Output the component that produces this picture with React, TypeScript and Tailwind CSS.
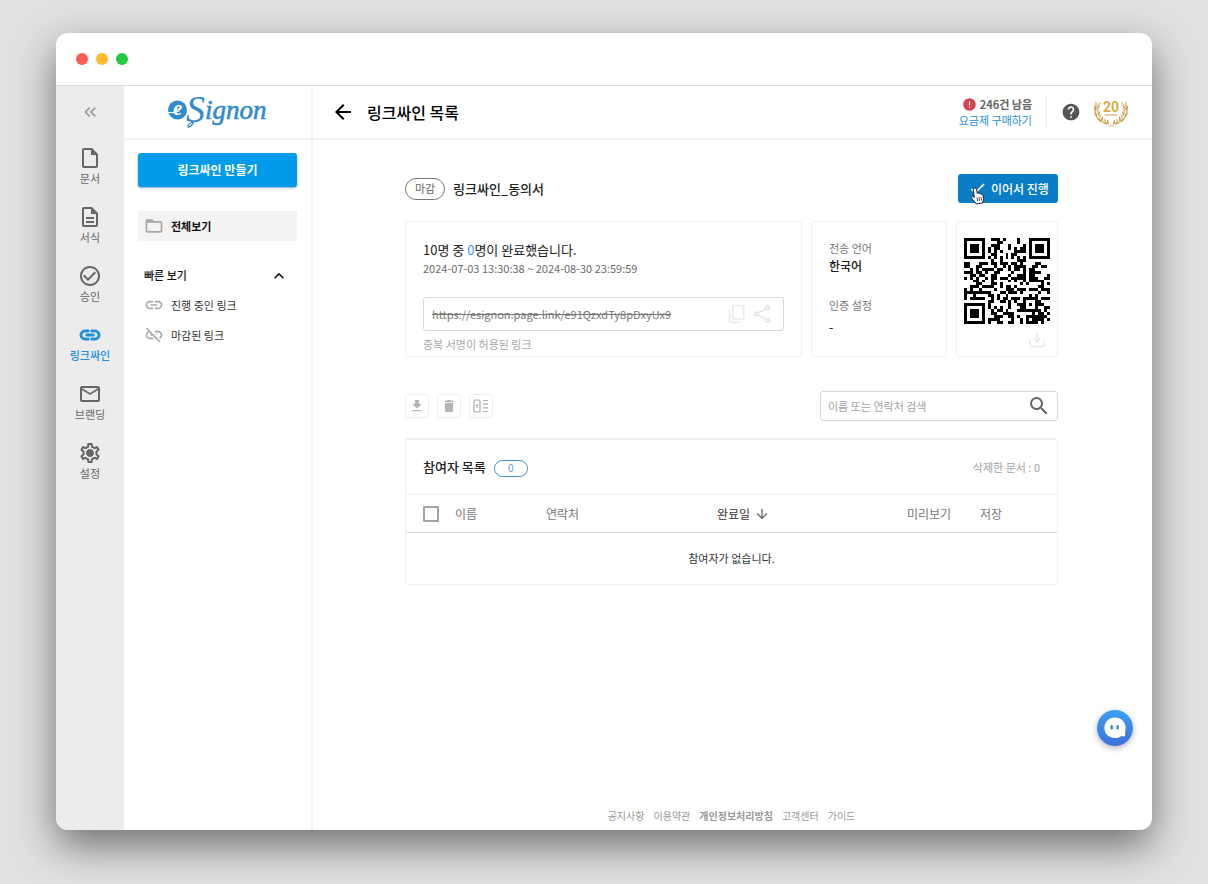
import React, { useState } from 'react';
import type { IconType } from 'react-icons';
import {
  MdArrowBack,
  MdArrowDownward,
  MdCheck,
  MdCheckCircleOutline,
  MdContentCopy,
  MdDelete,
  MdError,
  MdFileDownload,
  MdFolderOpen,
  MdHelp,
  MdKeyboardArrowUp,
  MdKeyboardDoubleArrowLeft,
  MdLink,
  MdLinkOff,
  MdMailOutline,
  MdOutlineDescription,
  MdOutlineInsertDriveFile,
  MdOutlineSettings,
  MdOutlineShare,
  MdSearch
} from 'react-icons/md';

const LINK_URL = 'https://esignon.page.link/e91QzxdTy8pDxyUx9';

/* ---------- QR code (version 3, level L, byte mode) ---------- */

const QR_SIZE = 29;
const QR_DATA = 55;
const QR_ECC = 15;
const QR_FORMAT = '110001100011000'; // level L, mask 5

const gfMul = (a: number, b: number) => {
  let r = 0;
  for (let i = 7; i >= 0; i--) {
    r = (r << 1) ^ ((r >>> 7) * 0x11d);
    r ^= ((b >>> i) & 1) * a;
  }
  return r;
};

const eccBytes = (data: number[]) => {
  const gen = new Array(QR_ECC).fill(0);
  gen[QR_ECC - 1] = 1;
  let root = 1;
  for (let i = 0; i < QR_ECC; i++) {
    for (let j = 0; j < QR_ECC; j++) {
      gen[j] = gfMul(gen[j], root) ^ (gen[j + 1] || 0);
    }
    root = gfMul(root, 2);
  }
  const rem = new Array(QR_ECC).fill(0);
  data.forEach((b) => {
    const factor = b ^ rem.shift();
    rem.push(0);
    gen.forEach((g, i) => {
      rem[i] ^= gfMul(g, factor);
    });
  });
  return rem;
};

function buildQr(text: string): boolean[][] {
  let bits = '0100' + text.length.toString(2).padStart(8, '0');
  for (const ch of text) bits += ch.charCodeAt(0).toString(2).padStart(8, '0');
  bits += '0000';
  const data: number[] = [];
  for (let i = 0; i < bits.length; i += 8) data.push(parseInt(bits.slice(i, i + 8), 2));
  for (let pad = 0xec; data.length < QR_DATA; pad ^= 0xec ^ 0x11) data.push(pad);
  const stream = [...data, ...eccBytes(data)].map((b) => b.toString(2).padStart(8, '0')).join('');

  const grid: (boolean | null)[][] = Array.from({ length: QR_SIZE }, () => new Array(QR_SIZE).fill(null));
  const square = (cy: number, cx: number, radius: number, light: number[]) => {
    for (let y = -radius; y <= radius; y++) {
      for (let x = -radius; x <= radius; x++) {
        const row = grid[cy + y];
        if (row && cx + x >= 0 && cx + x < QR_SIZE) {
          row[cx + x] = !light.includes(Math.max(Math.abs(x), Math.abs(y)));
        }
      }
    }
  };
  for (let i = 0; i < QR_SIZE; i++) {
    grid[6][i] = i % 2 === 0;
    grid[i][6] = i % 2 === 0;
  }
  square(3, 3, 4, [2, 4]);
  square(3, QR_SIZE - 4, 4, [2, 4]);
  square(QR_SIZE - 4, 3, 4, [2, 4]);
  square(22, 22, 2, [1]);

  const format = QR_FORMAT.split('').map((b) => b === '1');
  const near = [0, 1, 2, 3, 4, 5, 7, 8];
  near.forEach((p, i) => {
    grid[8][p] = format[i];
    grid[p][8] = format[14 - i];
  });
  for (let i = 0; i < 7; i++) grid[QR_SIZE - 1 - i][8] = format[i];
  for (let i = 0; i < 8; i++) grid[8][QR_SIZE - 8 + i] = format[7 + i];
  grid[QR_SIZE - 8][8] = true;

  let n = 0;
  for (let right = QR_SIZE - 1; right >= 1; right -= 2) {
    if (right === 6) right = 5;
    const up = ((right + 1) & 2) === 0;
    for (let v = 0; v < QR_SIZE; v++) {
      const y = up ? QR_SIZE - 1 - v : v;
      for (const x of [right, right - 1]) {
        if (grid[y][x] !== null) continue;
        const mask = ((x * y) % 2) + ((x * y) % 3) === 0;
        grid[y][x] = (stream[n++] === '1') !== mask;
      }
    }
  }
  return grid as boolean[][];
}

const QrCode = ({ value }: { value: string }) => (
  <svg viewBox={`0 0 ${QR_SIZE} ${QR_SIZE}`} className="size-[86px]" shapeRendering="crispEdges" role="img" aria-label="QR">
    {buildQr(value).map((row, y) =>
      row.map((on, x) => on && <rect key={`${x}-${y}`} x={x} y={y} width="1" height="1" fill="#000" />)
    )}
  </svg>
);

/* ---------- Drawings ---------- */

const Logo = () => (
  <svg viewBox="0 0 100 48" className="h-12 w-[100px]" role="img" aria-label="eSignon" fill="#2f8cc9">
    <circle cx="9.500" cy="22" r="9.500" />
    <text x="5" y="27" fontSize="21" fontWeight="700" fontStyle="italic" fontFamily="Liberation Serif, serif" fill="#fff">e</text>
    <path d="M0 24.500c4 .5 8 0 12-2" stroke="#fff" strokeWidth="1" fill="none" />
    <text x="18" y="34" fontSize="38" fontStyle="italic" fontFamily="Liberation Serif, serif">S</text>
    <text
      x="37"
      y="31"
      fontSize="27"
      fontStyle="italic"
      fontFamily="Liberation Serif, serif"
      stroke="#2f8cc9"
      strokeWidth="0.600"
    >
      ignon
    </text>
    <path d="M25 34c-3 1-5 3-5 5 2 0 5-2 6-6" stroke="#2f8cc9" strokeWidth="1.300" fill="none" />
  </svg>
);

const Laurel = () => {
  const leaves = [0, 1, 2, 3, 4, 5, 6, 7];
  return (
    <svg viewBox="0 0 36 32" className="h-8 w-9" aria-hidden="true">
      {[1, -1].map((side) => (
        <g key={side} transform={side === 1 ? undefined : 'translate(36 0) scale(-1 1)'}>
          <path d="M21 31C10 27 2 19 3 5" stroke="#d9bd85" strokeWidth="0.700" fill="none" />
          {leaves.map((i) => {
            const a = ((110 + i * 13) * Math.PI) / 180;
            const x = 18 + 15 * Math.cos(a);
            const y = 14 + 14 * Math.sin(a);
            return (
              <g key={i} fill={i % 2 ? '#dfc07c' : '#c09a50'}>
                <ellipse cx={x - 1} cy={y} rx="2.400" ry="0.900" transform={`rotate(${20 + i * 9} ${x - 1} ${y})`} />
                <ellipse cx={x + 2} cy={y - 1} rx="2.200" ry="0.800" transform={`rotate(${80 + i * 8} ${x + 2} ${y - 1})`} />
              </g>
            );
          })}
        </g>
      ))}
      <text x="18" y="16" textAnchor="middle" fontSize="14" fontWeight="700" fontFamily="Roboto, sans-serif" fill="#dcab45">20</text>
      <path d="M12 19h12" stroke="#dfc07c" strokeWidth="1.500" />
    </svg>
  );
};

const SettingsIcon = ({ className }: { className?: string }) => (
  <svg viewBox="0 0 24 24" className={className} fill="currentColor">
    <MdOutlineSettings size={24} />
    <circle cx="12" cy="12" r="3" />
  </svg>
);

const ColumnsIcon = () => (
  <svg viewBox="0 0 16 16" className="size-4" fill="none" stroke="#a9adad" strokeWidth="1.200">
    <rect x="1" y="2" width="6" height="12" rx="1.500" />
    <path d="M3 6.500l2 3M5 6.500l-2 3M10 2.500h5M10 6.200h5M10 9.800h5M10 13.500h5" />
  </svg>
);

const TrayIcon = () => (
  <svg viewBox="0 0 16 16" className="size-4" fill="none" stroke="#e8e8e8" strokeWidth="1.400">
    <path d="M8 1v8.500M4.500 6.500L8 10l3.500-3.500M1 8.500v4.500q0 1.500 1.500 1.500h11q1.500 0 1.500-1.500V8.500" />
  </svg>
);

const HandCursor = () => (
  <svg viewBox="0 0 16 18" className="pointer-events-none absolute left-[12px] top-[13px] h-[18px] w-4" aria-hidden="true">
    <path
      d="M4.500 1.200c1-.4 1.900.2 2.100 1.200l.6 3.800c.8-.5 1.600-.3 2 .5.700-.5 1.600-.2 1.900.6.900-.3 1.700.2 1.900 1.100l.5 3.200c.2 1.500-.6 2.600-.9 4.400l-6.400 1c-.9-2-3-3.600-4.900-6.200-.9-1.300.5-2.200 1.500-1.400l1.500 1.200L3.400 3c-.2-.8.200-1.500 1.100-1.800z"
      fill="#fff"
      stroke="#222"
      strokeWidth="1"
    />
    <path d="M7 10.500l.6 3.500M9 10.300l.5 3.500M11 10l.5 3.500" stroke="#222" strokeWidth="0.800" />
  </svg>
);

const ChatIcon = () => (
  <svg viewBox="0 0 36 36" className="size-9" aria-hidden="true">
    <path d="M18 7.500c6.200 0 10.600 4.300 10.600 10.300 0 2.500-.7 4.400-.4 6.600.2 1.200-.2 2-1.300 2-1 0-1.800-.5-2.700-.2-1.900 1.300-3.900 1.900-6.200 1.900-6.200 0-10.600-4.300-10.600-10.300S11.800 7.500 18 7.500z" fill="#fff" />
    <rect x="13.500" y="15" width="2.400" height="4.500" rx="1.200" fill="#3f83dc" />
    <rect x="19.500" y="15" width="2.400" height="4.500" rx="1.200" fill="#3f83dc" />
  </svg>
);

/* ---------- Page sections ---------- */

interface RailItem {
  label: string;
  icon: IconType | typeof SettingsIcon;
  active?: boolean;
}

const RAIL_ITEMS: RailItem[] = [
  { label: '문서', icon: MdOutlineInsertDriveFile },
  { label: '서식', icon: MdOutlineDescription },
  { label: '승인', icon: MdCheckCircleOutline },
  { label: '링크싸인', icon: MdLink, active: true },
  { label: '브랜딩', icon: MdMailOutline },
  { label: '설정', icon: SettingsIcon }
];

const IconRail = () => (
  <nav className="flex w-[68px] shrink-0 flex-col items-center bg-[#ececec] pt-4">
    <button aria-label="메뉴 접기" className="text-[#9b9b9b]">
      <MdKeyboardDoubleArrowLeft className="size-5" />
    </button>
    <ul className="mt-6 flex flex-col">
      {RAIL_ITEMS.map(({ label, icon: Icon, active }) => (
        <li key={label} className="h-[59px]">
          <a
            href="#"
            className={`flex flex-col items-center text-[11px] leading-4 ${active ? 'font-medium text-[#1c8fe0]' : 'text-[#666]'}`}
          >
            <Icon className={active ? 'size-6 stroke-0 [&>path:last-child]:stroke-[#1c8fe0] [&>path:last-child]:stroke-1' : 'size-6'} />
            {label}
          </a>
        </li>
      ))}
    </ul>
  </nav>
);

const Sidebar = () => (
  <aside className="flex w-[189px] shrink-0 flex-col border-r-2 border-[#f3f3f3]">
    <div className="flex h-[54px] shrink-0 items-center justify-center border-b-2 border-[#f3f3f3]">
      <Logo />
    </div>
    <div className="px-[14px] pt-[13px]">
      <button className="h-[34px] w-full rounded-[3px] bg-[#009bea] text-xs font-bold text-white shadow-[0_1px_2px_rgba(0,90,140,0.5)]">
        링크싸인 만들기
      </button>
      <a href="#" className="mt-6 flex h-[30px] items-center bg-[#f3f3f3] pl-1.5 text-[11px] font-bold text-[#111]">
        <MdFolderOpen className="mr-[7px] size-5 text-[#a8a8a8]" />
        전체보기
      </a>
      <button className="mt-5 flex h-[29px] w-full items-center justify-between pl-1.5 pr-2 text-[11px] font-medium text-[#111]">
        빠른 보기
        <MdKeyboardArrowUp className="size-5" />
      </button>
      <a href="#" className="flex h-[30px] items-center pl-1.5 text-[11px] text-[#333]">
        <MdLink className="mr-[7px] size-5 text-[#a8a8a8]" />
        진행 중인 링크
      </a>
      <a href="#" className="flex h-[30px] items-center pl-1.5 text-[11px] text-[#333]">
        <MdLinkOff className="mr-[7px] size-5 text-[#a8a8a8]" />
        마감된 링크
      </a>
    </div>
  </aside>
);

const Header = () => (
  <header className="flex h-[54px] shrink-0 items-center border-b-2 border-[#f3f3f3] pl-[18px] pr-[23px]">
    <button aria-label="뒤로" className="text-black">
      <MdArrowBack className="size-6" />
    </button>
    <h1 className="ml-3 flex-1 text-base font-medium text-black">링크싸인 목록</h1>
    <div className="text-right text-[11px] leading-4">
      <p className="flex items-center justify-end gap-[3px] font-bold text-[#666]">
        <MdError className="size-[15px] text-[#d8434e]" />
        246건 남음
      </p>
      <a href="#" className="block text-[#1f8fd8]">요금제 구매하기</a>
    </div>
    <div className="ml-[14px] h-8 border-l border-[#eee]" />
    <button aria-label="도움말" className="ml-[14px] text-[#555]">
      <MdHelp className="size-5" />
    </button>
    <div className="ml-3">
      <Laurel />
    </div>
  </header>
);

const SummaryCards = () => (
  <section className="mt-[18px] flex gap-[9px]">
    <div className="h-[136px] flex-1 rounded-[3px] border border-[#f0f0f0] px-[17px] pt-[18px]">
      <p className="text-[13px] leading-5 text-[#222]">
        10명 중 <span className="text-[#3a97dc]">0</span>명이 완료했습니다.
      </p>
      <p className="text-[11px] leading-4 text-[#6b6b6b]">2024-07-03 13:30:38 ~ 2024-08-30 23:59:59</p>
      <div className="mt-[21px] flex h-[34px] items-center rounded-[3px] border border-[#d9d9d9] pl-2 pr-2.5">
        <a href="#" className="flex-1 text-[11px] text-[#777] line-through">{LINK_URL}</a>
        <button aria-label="복사" className="text-[#ebebeb]">
          <MdContentCopy className="size-5 -scale-y-100" />
        </button>
        <button aria-label="공유" className="ml-1 text-[#e6e6e6]">
          <MdOutlineShare className="size-[22px]" />
        </button>
      </div>
      <p className="mt-[5px] text-[11px] leading-4 text-[#a9a9a9]">중복 서명이 허용된 링크</p>
    </div>
    <dl className="h-[136px] w-[136px] rounded-[3px] border border-[#f0f0f0] px-[17px] pt-[17px] text-xs leading-[18px]">
      <dt className="text-[11px] text-[#777]">전송 언어</dt>
      <dd className="font-medium text-[#222]">한국어</dd>
      <dt className="mt-[21px] text-[11px] text-[#777]">인증 설정</dt>
      <dd className="mt-1 font-medium text-[#222]">-</dd>
    </dl>
    <div className="flex h-[136px] w-[102px] flex-col items-center rounded-[3px] border border-[#f0f0f0] pt-4">
      <QrCode value={LINK_URL} />
      <button aria-label="QR 다운로드" className="mr-3 mt-2 self-end">
        <TrayIcon />
      </button>
    </div>
  </section>
);

const toolButton = 'flex size-6 items-center justify-center rounded-[3px] border border-[#ededed] text-[#b3b6b6]';

const Toolbar = () => {
  const [query, setQuery] = useState('');
  return (
    <section className="mt-[34px] flex items-center gap-2">
      <button aria-label="다운로드" className={toolButton}>
        <MdFileDownload className="size-4" />
      </button>
      <button aria-label="삭제" className={toolButton}>
        <MdDelete className="size-4" />
      </button>
      <button aria-label="열 설정" className={toolButton}>
        <ColumnsIcon />
      </button>
      <div className="ml-auto flex h-[30px] w-[238px] items-center rounded-[3px] border border-[#d6d6d6] pl-[7px] pr-1.5">
        <input
          aria-label="검색"
          value={query}
          onChange={(e) => setQuery(e.target.value)}
          placeholder="이름 또는 연락처 검색"
          className="min-w-0 flex-1 text-[11px] text-[#333] outline-none placeholder:text-[#a3a3a3]"
        />
        <button aria-label="검색 실행" className="text-[#666]">
          <MdSearch className="size-6" />
        </button>
      </div>
    </section>
  );
};

const ParticipantTable = () => (
  <section className="mt-[17px] rounded-[3px] border border-t-2 border-[#f0f0f0]">
    <div className="flex h-[54px] items-center px-[17px]">
      <h2 className="text-[13px] font-medium text-[#222]">참여자 목록</h2>
      <span className="ml-2 mt-0.5 flex h-[17px] w-[34px] items-center justify-center rounded-full border border-[#3a8fd6] text-[10px] leading-none text-[#5a9fd8]">
        0
      </span>
      <span className="ml-auto text-[11px] text-[#a3a3a3]">삭제한 문서 : 0</span>
    </div>
    <table className="w-full table-fixed text-left text-xs text-[#777]">
      <colgroup>
        <col className="w-[49px]" />
        <col className="w-[91px]" />
        <col className="w-[171px]" />
        <col />
        <col className="w-[73px]" />
        <col className="w-[77px]" />
      </colgroup>
      <thead>
        <tr className="h-[38px] border-b border-t border-b-[#dcdcdc] border-t-[#f0f0f0]">
          <th className="pl-[17px] align-middle">
            <input
              type="checkbox"
              aria-label="전체 선택"
              className="block size-4 appearance-none rounded-[1px] border-2 border-[#a3a3a3] checked:bg-[#a3a3a3]"
            />
          </th>
          <th className="font-normal">이름</th>
          <th className="font-normal">연락처</th>
          <th className="font-normal text-[#333]">
            <button className="flex items-center gap-1">
              완료일
              <MdArrowDownward className="size-4 text-[#666]" />
            </button>
          </th>
          <th className="font-normal">미리보기</th>
          <th className="font-normal">저장</th>
        </tr>
      </thead>
      <tbody>
        <tr className="h-[51px]">
          <td colSpan={6} className="text-center text-[11px] text-[#333]">참여자가 없습니다.</td>
        </tr>
      </tbody>
    </table>
  </section>
);

const FOOTER_LINKS = ['공지사항', '이용약관', '개인정보처리방침', '고객센터', '가이드'];

export default function App() {
  return (
    <div className="flex min-h-screen flex-col bg-[#e1e1e1] px-14 pb-[54px] pt-[33px] font-['Noto_Sans_CJK_KR',sans-serif]">
      <div className="relative flex flex-1 flex-col overflow-hidden rounded-xl bg-white shadow-[0_16px_40px_rgba(0,0,0,0.5)]">
        <div className="flex h-[53px] shrink-0 items-center gap-2 border-b border-[#dcdcdc] pl-5">
          <span className="size-3 rounded-full bg-[#fc5b57]" />
          <span className="size-3 rounded-full bg-[#fdbb2e]" />
          <span className="size-3 rounded-full bg-[#28c840]" />
        </div>
        <div className="flex flex-1">
          <IconRail />
          <Sidebar />
          <div className="flex min-w-0 flex-1 flex-col">
            <Header />
            <div className="flex flex-1 flex-col pr-0.5">
              <main className="mx-auto w-full max-w-[653px] flex-1 pt-[34px]">
                <div className="flex items-center">
                  <span className="flex h-[22px] w-10 items-center justify-center rounded-full border border-[#777] text-[11px] text-[#666]">
                    마감
                  </span>
                  <h2 className="ml-2 text-[13px] font-medium text-[#222]">링크싸인_동의서</h2>
                  <button className="relative ml-auto flex h-[29px] w-[100px] items-center gap-1 rounded-[3px] bg-[#0b7dc6] pl-[10px] text-xs font-medium text-white">
                    <MdCheck className="size-[19px]" />
                    이어서 진행
                    <HandCursor />
                  </button>
                </div>
                <SummaryCards />
                <Toolbar />
                <ParticipantTable />
              </main>
              <footer className="flex justify-center gap-[9px] pb-[6px] text-[10px] leading-4 text-[#999]">
                {FOOTER_LINKS.map((label, i) => (
                  <a key={label} href="#" className={i === 2 ? 'font-bold' : ''}>
                    {label}
                  </a>
                ))}
              </footer>
            </div>
          </div>
        </div>
        <button
          aria-label="채팅 상담"
          className="absolute bottom-[84px] right-[19px] rounded-full bg-linear-to-b from-[#3aa0f0] to-[#4070dc] shadow-[0_2px_6px_rgba(0,0,0,0.3)]"
        >
          <ChatIcon />
        </button>
      </div>
    </div>
  );
}
